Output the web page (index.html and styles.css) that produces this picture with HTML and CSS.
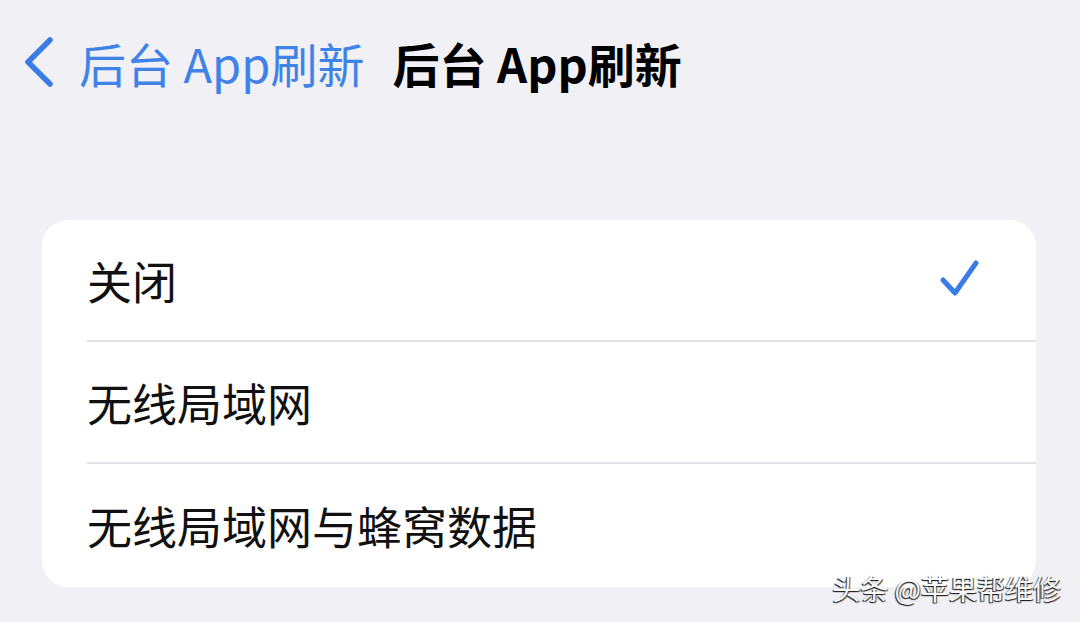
FILE: index.html
```html
<!DOCTYPE html>
<html lang="zh-CN">
<head>
    <meta charset="UTF-8">
    <meta name="viewport" content="width=device-width, initial-scale=1.0">
    <title>后台 App刷新</title>
    <link rel="stylesheet" href="styles.css">
</head>
<body>
    <div class="nav-bar">
        <a href="#" class="back-link">
            <svg class="back-icon" width="34" height="54" viewBox="0 0 34 54">
                <polyline points="29,5 7,27 29,49" fill="none" stroke="#3a7ce6" stroke-width="5.5" stroke-linecap="round" stroke-linejoin="round"/>
            </svg>
            <span class="back-text">后台 App刷新</span>
        </a>
        <h1 class="nav-title">后台 App刷新</h1>
    </div>

    <div class="settings-group">
        <div class="option-row">
            <div class="option-inner">
                <span class="option-label">关闭</span>
                <svg class="check-icon" width="44" height="42" viewBox="0 0 44 42">
                    <polyline points="5,22 17,35 38,5" fill="none" stroke="#3a7ce6" stroke-width="5" stroke-linecap="round" stroke-linejoin="round"/>
                </svg>
            </div>
        </div>
        <div class="option-row">
            <div class="option-inner">
                <span class="option-label">无线局域网</span>
            </div>
        </div>
        <div class="option-row">
            <div class="option-inner last">
                <span class="option-label">无线局域网与蜂窝数据</span>
            </div>
        </div>
    </div>

    <div class="watermark">头条 @苹果帮维修</div>
</body>
</html>
```

FILE: styles.css
```css
body {
    margin: 0;
    height: 622px;
    background-color: #f0f0f5;
    font-family: "Noto Sans CJK SC", "Noto Sans", sans-serif;
    position: relative;
    overflow: hidden;
}
.nav-bar {
    display: flex;
    align-items: center;
    height: 124px;
    padding-left: 21px;
}
.back-link {
    display: flex;
    align-items: center;
    text-decoration: none;
    color: #3f82e8; /* синий как в iOS */
}
.back-icon {
    margin-right: 24px;
}
.back-text {
    font-size: 47px;
    font-weight: 400;
}
.nav-title {
    margin: 0 0 0 28px;
    font-size: 47px;
    font-weight: 700;
    color: #000;
}
.settings-group {
    margin: 96px 44px 0 42px;
    background-color: #fff;
    border-radius: 26px;
    overflow: hidden;
}
.option-row {
    padding-left: 45px;
}
.option-inner {
    display: flex;
    align-items: center;
    justify-content: space-between;
    height: 120px;
    padding-right: 54px;
    border-bottom: 2px solid #e2e2e6;
}
.option-inner.last {
    border-bottom: none;
    height: 123px;
}
.option-label {
    font-size: 45px;
    color: #111;
}
.check-icon {
    margin-top: -2px;
}
.watermark {
    position: absolute;
    right: 19px;
    bottom: 14px;
    font-size: 28px;
    color: #fafafa;
    text-shadow: -1px 1px 1px #222, 1px 1px 1px #444;
}
```
